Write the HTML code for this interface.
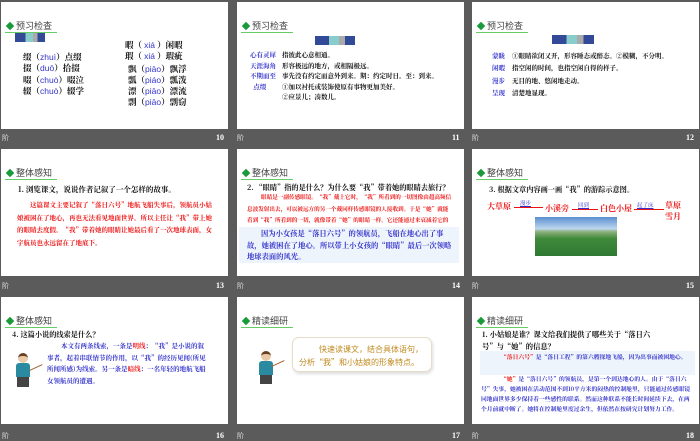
<!DOCTYPE html>
<html><head><meta charset="utf-8"><style>
*{margin:0;padding:0;box-sizing:border-box}
body{width:700px;height:438px;background:#5b5b5b;position:relative;overflow:hidden;font-family:"Liberation Serif","Noto Serif CJK SC",serif}
.s{position:absolute;width:227px;height:127px;background:#fff;overflow:hidden}
.a{position:absolute;white-space:nowrap}
.t{position:absolute;left:4px;top:19px;font:9px "Liberation Sans","Noto Sans CJK SC",sans-serif;color:#444;padding-left:11px;border-bottom:1px solid #6c6;height:12px;line-height:11px;width:52px;white-space:nowrap}
.t:before{content:"";position:absolute;left:2px;top:2px;width:6px;height:6px;background:#1a9a3a;transform:rotate(45deg)}
.f{position:absolute;color:#ddd;font:7px "Noto Sans CJK SC",sans-serif}
.n{position:absolute;color:#fff;font:bold 8px "Liberation Serif",serif}
.k{font-family:"Noto Serif CJK SC",serif;font-weight:bold}
.b{color:#33c}.r{color:#e11}.bk{color:#111}
.ic{position:absolute;height:9px;background:linear-gradient(90deg,#334a99 0 35%,#8cc 35% 60%,#aaa 60% 75%,#334a99 75%)}
.p{font-family:"Liberation Sans",sans-serif;color:#33c;font-weight:normal}
</style></head><body>

<!-- Slide 10 -->
<div class="s" style="left:1px;top:2px">
<div class="t">预习检查</div>
<div class="ic" style="left:14px;top:31px;width:30px"></div>
<div class="a k bk" style="left:22px;top:50px;font-size:8.5px;line-height:11.3px">
缀（<span class="p">zhuì</span>）点缀<br>掇（<span class="p">duō</span>）拾掇<br>啜（<span class="p">chuò</span>）啜泣<br>辍（<span class="p">chuò</span>）辍学</div>
<div class="a k bk" style="left:124px;top:38px;font-size:8.5px;line-height:11.3px">
暇（ <span class="p">xiá</span> ）闲暇<br>瑕（ <span class="p">xiá</span> ）瑕疵</div>
<div class="a k bk" style="left:127px;top:62px;font-size:8.5px;line-height:11px">
飘（<span class="p">piāo</span>）飘浮<br>瓢（<span class="p">piáo</span>）瓢泼<br>漂（<span class="p">piāo</span>）漂流<br>剽（<span class="p">piāo</span>）剽窃</div>
</div>
<div class="f" style="left:2px;top:133px">阶</div><div class="n" style="left:216px;top:133px">10</div>

<!-- Slide 11 -->
<div class="s" style="left:237px;top:2px">
<div class="t">预习检查</div>
<div class="ic" style="left:78px;top:34px;width:40px"></div>
<div class="a k" style="left:13px;top:48px;font-size:6.5px;line-height:10.5px;color:#33c">心有灵犀<br>天涯海角<br>不期而至<br>&nbsp;&nbsp;点缀</div>
<div class="a k bk" style="left:45px;top:48px;font-size:6.5px;line-height:10.5px">指彼此心意相通。<br>形容极远的地方，或相隔极远。<br>事先没有约定而意外到来。期：约定时日。至：到来。<br>①加以衬托或装饰使原有事物更加美好。<br>②应景儿；凑数儿。</div>
</div>
<div class="f" style="left:237px;top:133px">阶</div><div class="n" style="left:452px;top:133px">11</div>

<!-- Slide 12 -->
<div class="s" style="left:472px;top:2px">
<div class="t">预习检查</div>
<div class="ic" style="left:80px;top:33px;width:42px"></div>
<div class="a k" style="left:20px;top:48px;font-size:6.5px;line-height:12.3px;color:#33c">蒙眬<br>闲暇<br>漫步<br>呈现</div>
<div class="a k bk" style="left:40px;top:48px;font-size:6.5px;line-height:12.3px">①眼睛欲闭又开，形容睡态或醉态。②模糊，不分明。<br>指空闲的时间，也指空闲自得的样子。<br>无目的地、悠闲地走动。<br>清楚地显现。</div>
</div>
<div class="f" style="left:472px;top:133px">阶</div><div class="n" style="left:686px;top:133px">12</div>

<!-- Slide 13 -->
<div class="s" style="left:1px;top:149px">
<div class="t">整体感知</div>
<div class="a k bk" style="left:17px;top:35px;font-size:7.5px">1. 浏览课文，说说作者记叙了一个怎样的故事。</div>
<div class="a k r" style="left:16px;top:50px;font-size:6.5px;line-height:12.5px;white-space:normal;width:196px;text-indent:13px">这篇课文主要记叙了“落日六号”地航飞船失事后，领航员小姑娘被困在了地心，再也无法看见地面世界。所以主任让“我”带上她的眼睛去度假。“我”带着她的眼睛让她最后看了一次地球表面，女宇航员也永远留在了地底下。</div>
</div>
<div class="f" style="left:2px;top:281px">阶</div><div class="n" style="left:216px;top:281px">13</div>

<!-- Slide 14 -->
<div class="s" style="left:237px;top:149px">
<div class="t">整体感知</div>
<div class="a k bk" style="left:10px;top:34px;font-size:7.2px">2. “眼睛”指的是什么？为什么要“我”带着她的眼睛去旅行？</div>
<div class="a k r" style="left:10px;top:43px;font-size:5.6px;line-height:11.5px;white-space:normal;width:205px;text-indent:14px">眼睛是一副传感眼镜。“我”戴上它时，“我”所看到的一切图像由超高频信息波发射出去，可以被远方的另一个戴同样传感眼镜的人接收到。于是“她”就能看到“我”所看到的一切，就像带着“她”的眼睛一样。它还能通过来衰减着它的人的脑电波，把脑</div>
<div class="a" style="left:2px;top:78px;width:220px;height:36px;background:#eef4fb"></div>
<div class="a k b" style="left:10px;top:80px;font-size:7.3px;line-height:11.5px;white-space:normal;width:210px;text-indent:14px">因为小女孩是“落日六号”的领航员，飞船在地心出了事故，她被困在了地心。所以带上小女孩的“眼睛”最后一次领略地球表面的风光。</div>
</div>
<div class="f" style="left:237px;top:281px">阶</div><div class="n" style="left:452px;top:281px">14</div>

<!-- Slide 15 -->
<div class="s" style="left:472px;top:149px">
<div class="t">整体感知</div>
<div class="a k bk" style="left:17px;top:36px;font-size:7.2px">3. 根据文章内容画一画“我”的游踪示意图。</div>
<div class="a k r" style="left:15px;top:52px;font-size:8px">大草原</div>
<div class="a" style="left:42px;top:58px;width:29px;border-top:1px solid #e11"></div>
<div class="a b" style="left:48px;top:50px;font-size:5.5px;text-decoration:underline">漫步</div>
<div class="a k r" style="left:73px;top:54px;font-size:8px">小溪旁</div>
<div class="a" style="left:100px;top:60px;width:26px;border-top:1px solid #e11"></div>
<div class="a b" style="left:106px;top:52px;font-size:5.5px;text-decoration:underline">回到</div>
<div class="a k r" style="left:128px;top:54px;font-size:8px">白色小屋</div>
<div class="a" style="left:162px;top:60px;width:30px;border-top:1px solid #e11"></div>
<div class="a b" style="left:165px;top:52px;font-size:5.5px;text-decoration:underline">起了床</div>
<div class="a k r" style="left:193px;top:51px;font-size:8px;line-height:11px;text-align:center">草原<br>雪月</div>
<div class="a" style="left:63px;top:68px;width:82px;height:39px;background:linear-gradient(180deg,#5a8fd0 0%,#bcd5ee 30%,#8cb07a 38%,#3f8a3a 55%,#2f7a34 100%)"></div>
</div>
<div class="f" style="left:472px;top:281px">阶</div><div class="n" style="left:686px;top:281px">15</div>

<!-- Slide 16 -->
<div class="s" style="left:1px;top:297px">
<div class="t">整体感知</div>
<div class="a k bk" style="left:11px;top:33px;font-size:7.2px">4. 这篇小说的线索是什么？</div>
<div class="a" style="left:17px;top:56px;width:10px;height:10px;border-radius:50%;background:#e8c9a8;border-top:3px solid #6b4020"></div>
<div class="a" style="left:15px;top:66px;width:14px;height:14px;background:#2a8aa0;border-radius:3px 3px 0 0"></div>
<div class="a" style="left:16px;top:80px;width:12px;height:10px;background:#444"></div>
<div class="a" style="left:28px;top:70px;width:14px;border-top:1px solid #a06030;transform:rotate(-25deg)"></div>
<div class="a k b" style="left:46px;top:43px;font-size:6.5px;line-height:11.7px;white-space:normal;width:163px;text-indent:14px">本文有两条线索，一条是<span class="r">明线</span>：“我”是小说的叙事者，起着串联情节的作用，以“我”的经历见闻(所见所闻所感)为线索。另一条是<span class="r">暗线</span>：一名年轻的地航飞船女领航员的遭遇。</div>
</div>
<div class="f" style="left:2px;top:431px">阶</div><div class="n" style="left:216px;top:431px">16</div>

<!-- Slide 17 -->
<div class="s" style="left:237px;top:297px">
<div class="t">精读细研</div>
<div class="a" style="left:24px;top:54px;width:10px;height:10px;border-radius:50%;background:#e8c9a8;border-top:3px solid #6b4020"></div>
<div class="a" style="left:22px;top:64px;width:14px;height:14px;background:#2a8aa0;border-radius:3px 3px 0 0"></div>
<div class="a" style="left:23px;top:78px;width:12px;height:9px;background:#444"></div>
<div class="a" style="left:34px;top:66px;width:14px;border-top:1px solid #a06030;transform:rotate(-25deg)"></div>
<div class="a" style="left:55px;top:40px;width:140px;height:35px;border:1px solid #e6dcc8;border-radius:7px;box-shadow:1px 2px 3px #ddd"></div>
<div class="a" style="left:82px;top:47px;font:8px 'Noto Sans CJK SC',sans-serif;color:#c08a20">快速读课文，结合具体语句，</div>
<div class="a" style="left:62px;top:60px;font:8px 'Noto Sans CJK SC',sans-serif;color:#c08a20">分析“我”和小姑娘的形象特点。</div>
</div>
<div class="f" style="left:237px;top:431px">阶</div><div class="n" style="left:452px;top:431px">17</div>

<!-- Slide 18 -->
<div class="s" style="left:472px;top:297px">
<div class="t">精读细研</div>
<div class="a k bk" style="left:10px;top:32px;font-size:7.3px;line-height:12px;white-space:normal;width:205px">1. 小姑娘是谁？课文给我们提供了哪些关于“落日六号”与“她”的信息？</div>
<div class="a" style="left:8px;top:54px;width:215px;height:24px;background:#eef4fb"></div>
<div class="a k b" style="left:9px;top:55px;font-size:5.8px;line-height:10.5px;white-space:normal;width:210px;text-indent:20px"><span class="r">“落日六号”</span>是“落日工程”的第六艘探地飞船，因为出事而被困地心。</div>
<div class="a k b" style="left:9px;top:77px;font-size:5.8px;line-height:10px;white-space:normal;width:210px;text-indent:20px"><span class="r">“她”</span>是“落日六号”的领航员，是第一个到达地心的人。由于“落日六号”失事，她被困在活动范围不到10平方米的闷热的控制舱里，只能通过传感眼镜同地面世界多少保持着一些感性的联系。然而这种联系不能长时间延续下去，在两个月前就中断了。她将在控制舱里度过余生，但依然在按研究计划努力工作。</div>
</div>
<div class="f" style="left:472px;top:431px">阶</div><div class="n" style="left:686px;top:431px">18</div>

</body></html>
